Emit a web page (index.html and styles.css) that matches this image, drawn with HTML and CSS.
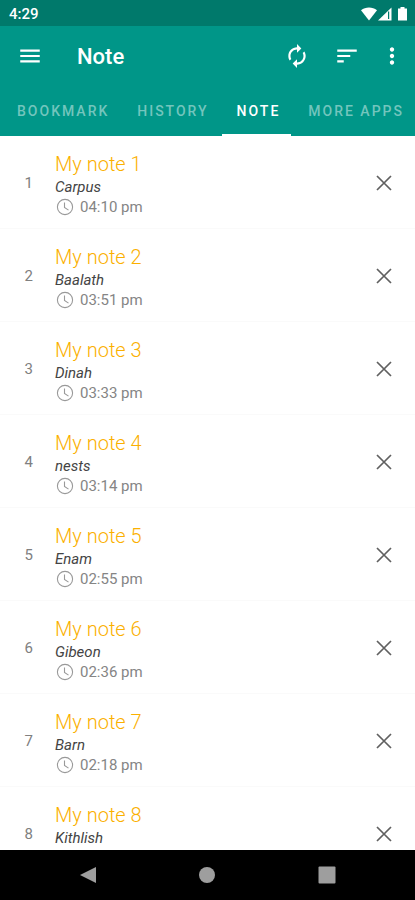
FILE: index.html
```html
<!DOCTYPE html>
<html lang="en">
<head>
<meta charset="utf-8">
<meta name="viewport" content="width=device-width, initial-scale=1">
<title>Note</title>
<link rel="stylesheet" href="styles.css">
</head>
<body>
<svg class="defs" aria-hidden="true">
  <symbol id="close" viewBox="0 0 16 16"><path d="M1 1l14 14M15 1L1 15" fill="none" stroke="currentColor" stroke-width="1.7"/></symbol>
  <symbol id="clock" viewBox="0 0 18 18"><circle cx="9" cy="9" r="7.6" fill="none" stroke="currentColor" stroke-width="1.1"/><path d="M8.500 4.500v5l4 2.600" fill="none" stroke="currentColor" stroke-width="1.1"/></symbol>
</svg>
<div class="status">
  <span>4:29</span>
  <svg class="status-icons" viewBox="0 0 48 16" aria-hidden="true">
    <path fill="#fff" d="M0 4.200C4.500.6 11.500.6 16 4.200L8 14.500z"/>
    <path fill="#fff" d="M30.500 1.500v13H17z"/>
    <path fill="#00796b" d="M27 5.500h1.200v7.500h-1.200z"/>
    <path fill="#fff" d="M39.500 1h4v1.500h2.500v12h-9v-12h2.500z"/>
  </svg>
</div>
<header class="appbar">
  <div class="toolbar">
    <button class="icon-btn" aria-label="Menu"><svg viewBox="0 0 24 24"><path d="M3 18h18v-2H3v2zm0-5h18v-2H3v2zm0-7v2h18V6H3z"/></svg></button>
    <h1>Note</h1>
    <button class="icon-btn" aria-label="Refresh"><svg viewBox="0 0 24 24"><path d="M12 6v3l4-4-4-4v3c-4.420 0-8 3.580-8 8 0 1.570.46 3.030 1.240 4.260L6.700 14.800c-.45-.83-.7-1.790-.7-2.800 0-3.310 2.690-6 6-6zm6.760 1.740L17.300 9.200c.44.840.7 1.790.7 2.800 0 3.310-2.690 6-6 6v-3l-4 4 4 4v-3c4.420 0 8-3.580 8-8 0-1.570-.46-3.030-1.240-4.260z"/></svg></button>
    <button class="icon-btn" aria-label="Sort"><svg viewBox="0 0 24 24"><path d="M3 18h6v-2H3v2zM3 6v2h18V6H3zm0 7h12v-2H3v2z"/></svg></button>
    <button class="icon-btn more" aria-label="More options"><svg viewBox="0 0 24 24"><path d="M12 8c1.100 0 2-.9 2-2s-.9-2-2-2-2 .9-2 2 .9 2 2 2zm0 2c-1.100 0-2 .9-2 2s.9 2 2 2 2-.9 2-2-.9-2-2-2zm0 6c-1.100 0-2 .9-2 2s.9 2 2 2 2-.9 2-2-.9-2-2-2z"/></svg></button>
  </div>
  <nav class="tabs">
    <a href="#bookmark">BOOKMARK</a>
    <a href="#history">HISTORY</a>
    <a href="#note" class="active" aria-current="page">NOTE</a>
    <a href="#apps">MORE APPS</a>
  </nav>
</header>
<main>
  <ul class="notes">
    <li><span class="num">1</span><div class="body"><h2>My note 1</h2><p>Carpus</p><time><svg><use href="#clock"/></svg>04:10 pm</time></div><button class="del" aria-label="Delete note 1"><svg><use href="#close"/></svg></button></li>
    <li><span class="num">2</span><div class="body"><h2>My note 2</h2><p>Baalath</p><time><svg><use href="#clock"/></svg>03:51 pm</time></div><button class="del" aria-label="Delete note 2"><svg><use href="#close"/></svg></button></li>
    <li><span class="num">3</span><div class="body"><h2>My note 3</h2><p>Dinah</p><time><svg><use href="#clock"/></svg>03:33 pm</time></div><button class="del" aria-label="Delete note 3"><svg><use href="#close"/></svg></button></li>
    <li><span class="num">4</span><div class="body"><h2>My note 4</h2><p>nests</p><time><svg><use href="#clock"/></svg>03:14 pm</time></div><button class="del" aria-label="Delete note 4"><svg><use href="#close"/></svg></button></li>
    <li><span class="num">5</span><div class="body"><h2>My note 5</h2><p>Enam</p><time><svg><use href="#clock"/></svg>02:55 pm</time></div><button class="del" aria-label="Delete note 5"><svg><use href="#close"/></svg></button></li>
    <li><span class="num">6</span><div class="body"><h2>My note 6</h2><p>Gibeon</p><time><svg><use href="#clock"/></svg>02:36 pm</time></div><button class="del" aria-label="Delete note 6"><svg><use href="#close"/></svg></button></li>
    <li><span class="num">7</span><div class="body"><h2>My note 7</h2><p>Barn</p><time><svg><use href="#clock"/></svg>02:18 pm</time></div><button class="del" aria-label="Delete note 7"><svg><use href="#close"/></svg></button></li>
    <li><span class="num">8</span><div class="body"><h2>My note 8</h2><p>Kithlish</p></div><button class="del" aria-label="Delete note 8"><svg><use href="#close"/></svg></button></li>
  </ul>
</main>
<footer class="navbar">
  <button aria-label="Back"><svg viewBox="0 0 18 18"><path d="M17 1v16L1 9z"/></svg></button>
  <button aria-label="Home"><svg viewBox="0 0 18 18"><circle cx="9" cy="9" r="8"/></svg></button>
  <button aria-label="Recent apps"><svg viewBox="0 0 18 18"><rect x="0.500" y="0.500" width="17" height="17" rx="1"/></svg></button>
</footer>
</body>
</html>
```
FILE: styles.css
```css
* {
  box-sizing: border-box;
}

body {
  margin: 0;
  height: 100vh;
  display: flex;
  flex-direction: column;
  overflow: hidden;
  background: #fff;
  font-family: Roboto, "Liberation Sans", sans-serif;
}

h1,
h2,
p,
ul {
  margin: 0;
  padding: 0;
}

button {
  border: 0;
  padding: 0;
  background: none;
  color: inherit;
  display: flex;
  align-items: center;
  justify-content: center;
}

.defs {
  display: none;
}

.status {
  flex: none;
  height: 26px;
  padding: 2px 6px 0 9px;
  display: flex;
  align-items: center;
  justify-content: space-between;
  background: #00796b;
  color: #fff;
  font-size: 15px;
  font-weight: 500;
}

.status-icons {
  width: 48px;
  height: 16px;
}

.appbar {
  flex: none;
  background: #009688;
  color: #fff;
}

.toolbar {
  height: 60px;
  padding: 0 10px 0 5px;
  display: flex;
  align-items: center;
}

.toolbar h1 {
  flex: 1;
  padding-left: 22px;
  font-size: 22px;
  font-weight: 500;
}

.icon-btn {
  width: 50px;
  height: 50px;
}

.icon-btn svg {
  width: 26px;
  height: 26px;
  fill: currentColor;
}

.more {
  width: 26px;
  margin-left: 7px;
}

.tabs {
  height: 50px;
  padding-left: 2px;
  display: flex;
  justify-content: space-between;
}

.tabs a {
  display: flex;
  align-items: center;
  padding: 2px 11px 0 15px;
  border-bottom: 2px solid transparent;
  color: #73c5bd;
  font-size: 14px;
  font-weight: 500;
  letter-spacing: 2px;
  text-decoration: none;
  white-space: nowrap;
}

.tabs .active {
  color: #fff;
  border-color: #fff;
}

main {
  flex: 1;
  min-height: 0;
  overflow: hidden;
}

.notes {
  list-style: none;
}

.notes li {
  height: 93px;
  display: flex;
  align-items: flex-start;
  border-bottom: 1px solid #fafafa;
}

.num {
  width: 55px;
  padding-right: 22px;
  text-align: right;
  line-height: 94px;
  font-size: 15px;
  color: #808080;
}

.body {
  flex: 1;
  padding-top: 15px;
}

.body h2 {
  font-size: 20px;
  line-height: 26px;
  font-weight: 300;
  color: #fbb000;
}

.body p {
  font-size: 15px;
  line-height: 20px;
  font-style: italic;
  color: #444;
}

.body time {
  display: flex;
  align-items: center;
  gap: 6px;
  padding-left: 1px;
  font-size: 15px;
  line-height: 20px;
  color: #858585;
}

.body time svg {
  width: 18px;
  height: 18px;
  color: #999;
}

.del {
  width: 62px;
  height: 93px;
  color: #606060;
}

.del svg {
  width: 16px;
  height: 16px;
}

.navbar {
  flex: none;
  height: 50px;
  padding: 0 28px;
  display: grid;
  grid-template-columns: repeat(3, 1fr);
  background: #000;
  color: #9e9e9e;
}

.navbar svg {
  width: 18px;
  height: 18px;
  fill: currentColor;
}
```
